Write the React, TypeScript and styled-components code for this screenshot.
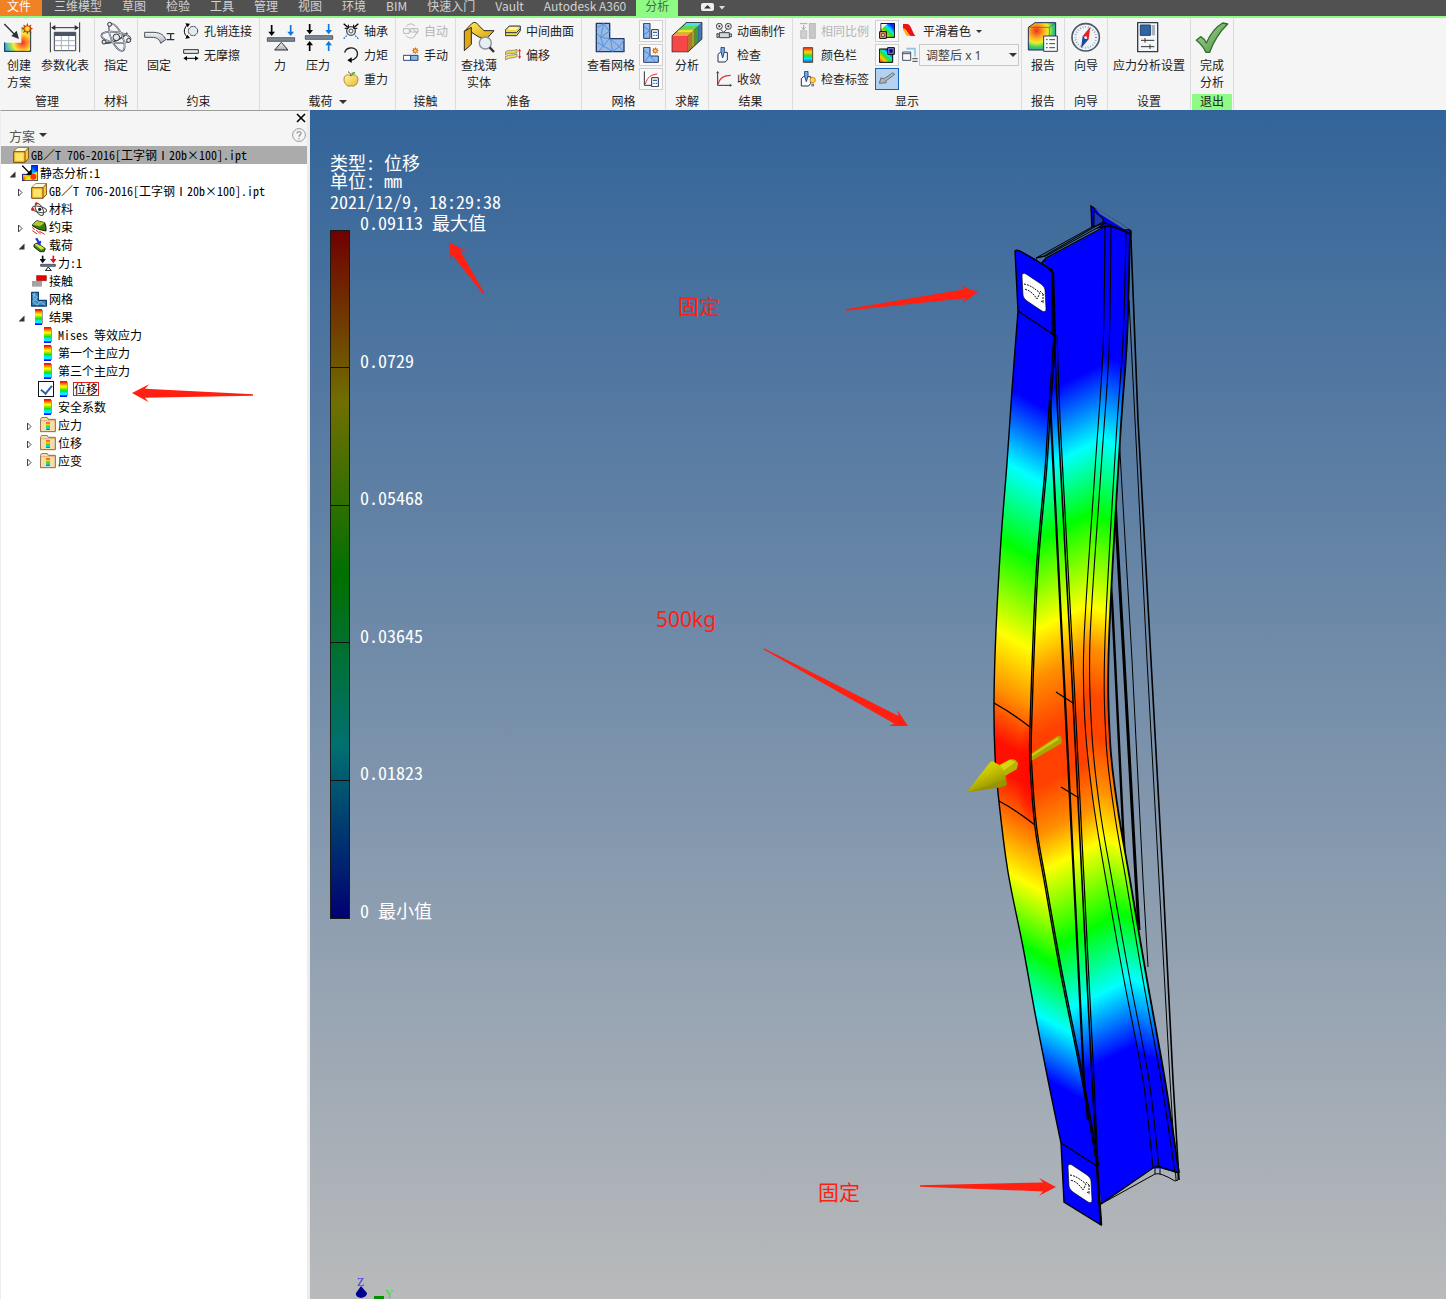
import React from "react";
import styled, { createGlobalStyle } from "styled-components";

const UI = `"Noto Sans", "Noto Sans CJK SC", sans-serif`;
const CJK = `"Noto Sans CJK SC", sans-serif`;

const Global = createGlobalStyle`
  * { box-sizing: border-box; }
  body { margin: 0; background: #fff; font-family: ${UI}; font-size: 12px; color: #222; }
  button, select, input { font: inherit; color: inherit; margin: 0; }
  ul { list-style: none; margin: 0; padding: 0; }
`;

/* ---------- shell ---------- */
const App_ = styled.div`
  display: flex;
  flex-direction: column;
  min-height: 100vh;
`;
const TabBar = styled.nav`
  display: flex;
  height: 18px;
  background: #515151;
  border-bottom: 2px solid #8dfb84;
  font-family: ${CJK};
`;
const Tab = styled.button<{ $kind?: "file" | "active" }>`
  border: 0;
  height: 16px;
  padding: 0 ${(p) => (p.$kind === "active" ? 9 : 10)}px;
  width: ${(p) => (p.$kind === "file" ? "42px" : "auto")};
  ${(p) => p.$kind === "file" && "padding: 0 11px 0 7px; margin-right: 2px;"}
  line-height: 12px;
  padding-bottom: 4px;
  white-space: nowrap;
  color: ${(p) => (p.$kind === "file" ? "#fff" : p.$kind === "active" ? "#4a6a48" : "#d2d2d2")};
  background: ${(p) => (p.$kind === "file" ? "#f08125" : p.$kind === "active" ? "#8dfb84" : "transparent")};
`;
const Collapse = styled.button`
  border: 0;
  background: none;
  height: 14px;
  margin-left: 22px;
  padding: 0;
  display: flex;
  align-items: center;
`;

/* ---------- ribbon ---------- */
const Ribbon = styled.div`
  display: flex;
  height: 92px;
  background: #f5f5f5;
`;
const Panel = styled.section<{ $w: number }>`
  flex: none;
  width: ${(p) => p.$w}px;
  display: flex;
  flex-direction: column;
  border-right: 1px solid #dcdcdc;
`;
const PanelBody = styled.div<{ $center?: boolean; $pad?: number }>`
  flex: 1;
  display: flex;
  padding: 1px 0 0 ${(p) => p.$pad ?? 0}px;
  justify-content: ${(p) => (p.$center ? "center" : "flex-start")};
`;
const PanelTitle = styled.h2<{ $exit?: boolean }>`
  margin: 0 1px;
  height: 16px;
  font-size: 12px;
  font-weight: 400;
  line-height: 16px;
  display: flex;
  align-items: center;
  justify-content: center;
  gap: 6px;
  background: ${(p) => (p.$exit ? "#8dfb84" : "transparent")};
`;
const BigButton = styled.button<{ $w?: number }>`
  flex: none;
  width: ${(p) => p.$w ?? 38}px;
  border: 0;
  padding: 1px 0 0;
  background: none;
  display: flex;
  flex-direction: column;
  align-items: center;
  line-height: 17px;
  white-space: pre;
  text-align: center;
  gap: 3px;
`;
const Column = styled.div<{ $gap?: number }>`
  display: flex;
  flex-direction: column;
  margin-left: ${(p) => p.$gap ?? 0}px;
`;
const SmallButton = styled.button<{ $off?: boolean }>`
  height: 24px;
  border: 0;
  padding: 0;
  background: none;
  display: flex;
  align-items: center;
  gap: 5px;
  white-space: nowrap;
  color: ${(p) => (p.$off ? "#b4b4b4" : "inherit")};
`;
const IconButton = styled.button<{ $on?: boolean }>`
  width: 24px;
  height: 22px;
  margin: 1px 0;
  padding: 0;
  display: grid;
  place-items: center;
  border: 1px solid ${(p) => (p.$on ? "#1064b8" : "#cfcfcf")};
  background: ${(p) => (p.$on ? "#b4d2ef" : "#fafafa")};
`;
const SelectWrap = styled.div`
  display: flex;
  align-items: center;
  height: 24px;
  gap: 1px;
`;
const SelectBox = styled.div`
  position: relative;
  display: flex;
  & > svg { position: absolute; right: 2px; top: 9px; pointer-events: none; }
`;
const Select = styled.select`
  appearance: none;
  width: 100px;
  height: 22px;
  padding: 0 6px;
  border: 1px solid #c8c8c8;
  border-radius: 0;
  background: #f5f5f5;
  color: #444;
`;
const Down = ({ w = 8 }: { w?: number }) => (
  <svg width={w} height={w / 2} viewBox="0 0 8 4" aria-hidden><path d="M0 0H8L4 4Z" fill="#333" /></svg>
);

type IP = { vb: string; w?: number; h?: number; children: React.ReactNode };
const IconSvg = styled.svg`
  flex: none;
`;
const Icon = ({ vb, w = 16, h = 16, children }: IP) => (
  <IconSvg width={w} height={h} viewBox={vb} fill="none" strokeLinejoin="round" aria-hidden>
    {children}
  </IconSvg>
);
const Big = ({ x, children }: { x: number; children: React.ReactNode }) => (
  <Icon vb={`${x} 60 108 102`} w={36} h={34}>{children}</Icon>
);

const K = "#2c3038";
const B = "#0a78e0";
const Star = ({ x, y, r = 16 }: { x: number; y: number; r?: number }) => {
  const pts = Array.from({ length: 16 }, (_, i) => {
    const a = (i * Math.PI) / 8;
    const q = i % 2 ? r * 0.5 : r;
    return `${x + q * Math.cos(a)},${y + q * Math.sin(a)}`;
  }).join(" ");
  return (<><polygon points={pts} fill="#d22b00" /><circle cx={x} cy={y} r={r * 0.42} fill="#ffe23c" stroke="#f08a00" strokeWidth="2" /></>);
};
const VArrow = ({ x, from, to, c }: { x: number; from: number; to: number; c: string }) => {
  const s = to > from ? 1 : -1;
  return (<><path d={`M${x} ${from}V${to - s * 8}`} stroke={c} strokeWidth="5" /><path d={`M${x - 10} ${to - s * 13}H${x + 10}L${x} ${to}Z`} fill={c} /></>);
};
const HiddenSvg = styled.svg`
  position: absolute;
`;
const Defs = () => (
  <HiddenSvg width="0" height="0" aria-hidden>
    <defs>
      <radialGradient id="heat" gradientUnits="userSpaceOnUse" cx="68" cy="128" r="56">
        <stop offset="0" stopColor="#f03030" /><stop offset=".25" stopColor="#ff8a20" /><stop offset=".5" stopColor="#ffe640" />
        <stop offset=".7" stopColor="#7ee060" /><stop offset="1" stopColor="#30a0ff" />
      </radialGradient>
      <radialGradient id="heat2" cx=".3" cy=".3" r=".8">
        <stop offset="0" stopColor="#f03020" /><stop offset=".35" stopColor="#ffb020" /><stop offset=".55" stopColor="#e8f030" />
        <stop offset=".75" stopColor="#40d060" /><stop offset="1" stopColor="#2080f0" />
      </radialGradient>
      <linearGradient id="rainV" x1="0" y1="0" x2="0" y2="1">
        <stop offset="0" stopColor="#f02020" /><stop offset=".3" stopColor="#ffd800" /><stop offset=".55" stopColor="#30d830" />
        <stop offset=".75" stopColor="#00e8f0" /><stop offset="1" stopColor="#1050ff" />
      </linearGradient>
      <linearGradient id="rainStrip" gradientUnits="userSpaceOnUse" x1="0" y1="0" x2="0" y2="16">
        <stop offset=".06" stopColor="#f01010" /><stop offset=".2" stopColor="#ff9000" /><stop offset=".35" stopColor="#ffff00" />
        <stop offset=".6" stopColor="#20d820" /><stop offset=".7" stopColor="#00e8c0" /><stop offset=".76" stopColor="#00f0ff" />
        <stop offset=".88" stopColor="#00f0ff" /><stop offset=".92" stopColor="#0010ff" />
      </linearGradient>
      <linearGradient id="rainD" x1="0" y1="1" x2="1" y2="0">
        <stop offset="0" stopColor="#ff1000" /><stop offset=".25" stopColor="#ffd000" /><stop offset=".45" stopColor="#30e020" />
        <stop offset=".6" stopColor="#00e8ff" /><stop offset=".8" stopColor="#0030ff" />
      </linearGradient>
      <linearGradient id="gold" x1="0" y1="0" x2="1" y2="1">
        <stop offset="0" stopColor="#fff060" /><stop offset="1" stopColor="#d8a010" />
      </linearGradient>
      <linearGradient id="fruit" x1="0" y1="0" x2="1" y2="1">
        <stop offset="0" stopColor="#fff8a8" /><stop offset="1" stopColor="#e8b830" />
      </linearGradient>
      <linearGradient id="steel" x1="0" y1="0" x2="0" y2="1">
        <stop offset="0" stopColor="#f4f6f8" /><stop offset="1" stopColor="#a8b0ba" />
      </linearGradient>
      <linearGradient id="tick" x1="0" y1="0" x2="1" y2="1">
        <stop offset="0" stopColor="#a8d890" /><stop offset="1" stopColor="#4f9048" />
      </linearGradient>
    </defs>
  </HiddenSvg>
);

/* ---------- ribbon icons ---------- */
const I = {
  create: (<Big x={3}><path d="M12 128H64V80H93V156H12Z" fill="url(#heat)" /><path d="M14 127V154H92V82" stroke="#1c2c50" strokeWidth="3" /><path d="M13 72L46 106" stroke={K} strokeWidth="4" /><path d="M57 117L34 108L50 92Z" fill={K} /><Star x={82} y={86} r={18} /></Big>),
  table: (<Big x={141}><path d="M151 67V157M239 67V157M158 83H232" stroke={K} strokeWidth="3" /><path d="M153 83L166 75V91ZM237 83L224 75V91Z" fill={K} /><rect x="163" y="97" width="64" height="55" fill="#fff" stroke="#3a4250" strokeWidth="3" /><path d="M163 97H227V108H163Z" fill="#4a5464" /><path d="M164 122H226M164 137H226M184 108V152M206 108V152" stroke="#aab0ba" strokeWidth="3" /></Big>),
  atom: (<Big x={294}><g stroke="#3a4454" strokeWidth="5"><ellipse cx="348" cy="112" rx="44" ry="16" transform="rotate(8 348 112)" /><ellipse cx="350" cy="112" rx="44" ry="17" transform="rotate(66 350 112)" /><path d="M310 128C325 134 365 118 382 98" /></g><g stroke="#e4eaf0" strokeWidth="2"><ellipse cx="348" cy="112" rx="44" ry="16" transform="rotate(8 348 112)" /><ellipse cx="350" cy="112" rx="44" ry="17" transform="rotate(66 350 112)" /></g><g fill="#e4e9ee" stroke={K} strokeWidth="3"><circle cx="349" cy="112" r="10" /><circle cx="329" cy="73" r="6" /><circle cx="386" cy="121" r="6" /><circle cx="312" cy="126" r="6" /></g></Big>),
  fix: (<Big x={423}><path d="M434 97H462C482 98 493 106 497 119L482 130C479 118 470 112 456 112H434Z" fill="url(#steel)" stroke="#4a505a" strokeWidth="3" /><path d="M500 101H523M500 119H523M512 101V119" stroke={K} strokeWidth="4" /></Big>),
  pin: (<Icon vb="549 69 48 48"><circle cx="579" cy="93" r="14" fill="#e6eaee" stroke="#3c4654" strokeWidth="3" strokeDasharray="9 2" /><path d="M562 75C550 86 550 101 562 111" stroke="#000" strokeWidth="3" /><path d="M556 70L570 71L563 82ZM556 116L570 114L562 104Z" fill="#000" /></Icon>),
  slide: (<Icon vb="549 141 48 48"><rect x="551" y="149" width="44" height="11" fill="#e8ecf0" stroke={K} strokeWidth="3" /><path d="M556 175H590" stroke="#000" strokeWidth="3" /><path d="M550 175L561 168V182ZM596 175L585 168V182Z" fill="#000" /></Icon>),
  force: (<Big x={786}><VArrow x={815} from={75} to={108} c="#000" /><VArrow x={872} from={75} to={108} c={B} /><rect x="802" y="113" width="82" height="11" fill="#7d8894" stroke={K} strokeWidth="2" /><path d="M844 127L824 150H864Z" fill="url(#steel)" stroke={K} strokeWidth="3" /></Big>),
  press: (<Big x={900}><VArrow x={929} from={72} to={103} c="#000" /><VArrow x={986} from={72} to={103} c={B} /><VArrow x={929} from={153} to={123} c="#000" /><VArrow x={986} from={153} to={123} c={B} /><rect x="916" y="107" width="82" height="11" fill="#7d8894" stroke={K} strokeWidth="2" /></Big>),
  bearing: (<Icon vb="1029 69 48 48"><circle cx="1053" cy="93" r="13" stroke="#444c58" strokeWidth="4" /><circle cx="1053" cy="93" r="6" stroke="#444c58" strokeWidth="3" /><path d="M1031 71L1043 82M1075 71L1063 82" stroke="#000" strokeWidth="4" /><path d="M1045 74V85H1034M1061 74V85H1072" stroke="#000" strokeWidth="3" /><path d="M1031 116L1043 104M1075 116L1063 104" stroke={B} strokeWidth="4" strokeDasharray="5 3" /></Icon>),
  moment: (<Icon vb="1029 141 48 48"><path d="M1034 158C1038 142 1062 138 1071 154C1076 168 1066 180 1052 181" stroke="#222" strokeWidth="4" /><path d="M1042 181L1055 172V189Z" fill="#000" /></Icon>),
  apple: (<Icon vb="1029 213 48 48"><path d="M1053 228C1043 220 1031 226 1032 240C1034 254 1045 262 1053 257C1062 262 1073 253 1074 239C1074 226 1062 221 1053 228Z" fill="url(#fruit)" stroke="#b08a2c" strokeWidth="3" /><path d="M1053 228C1052 221 1048 217 1044 215" stroke="#6a4a18" strokeWidth="3" /><path d="M1053 224C1054 216 1062 215 1066 216C1064 223 1058 226 1053 224Z" fill="#58a830" /></Icon>),
  auto: (<Icon vb="39 69 48 48"><g stroke="#b8b8b8" strokeWidth="3"><path d="M48 80C55 70 67 69 75 78M48 106C54 115 64 116 71 111" /><path d="M40 86H58V100H40ZM62 86H84V96H62Z" /><path d="M66 84L84 101M80 98L72 112" /></g></Icon>),
  manual: (<Icon vb="39 141 48 48"><rect x="40" y="166" width="22" height="15" fill="#fff" stroke="#26467c" strokeWidth="3" /><rect x="62" y="166" width="22" height="15" fill="#8db4e2" stroke="#26467c" strokeWidth="3" /><Star x={76} y={152} r={11} /></Icon>),
  thin: (<Big x={213}><path d="M244 94L223 94L246 70C252 66 258 66 262 72L282 92L312 92L292 114C276 120 262 108 246 98Z" fill="url(#gold)" stroke="#2b2618" strokeWidth="3" /><path d="M223 94L244 82V133L223 152Z" fill="#e0a818" stroke="#2b2618" strokeWidth="3" /><circle cx="286" cy="129" r="18" fill="#e6eef4" stroke="#8a8f96" strokeWidth="4" /><path d="M299 142L312 156" stroke="#333" strokeWidth="7" /></Big>),
  mid: (<Icon vb="345 69 48 48"><path d="M346 90L358 78H391V92L380 107H346Z" fill="#f8d838" stroke="#1b3560" strokeWidth="3" /><path d="M346 98H379L391 86" stroke="#1b3560" strokeWidth="3" /><path d="M352 88L360 82H386L379 90Z" fill="#fff8c0" /></Icon>),
  offset: (<Icon vb="345 141 48 48"><path d="M346 156C358 147 366 155 381 148V158C366 164 358 155 346 165Z" fill="#f8d838" stroke="#5d6a78" strokeWidth="2" /><path d="M346 170C358 162 366 168 381 162V170C366 176 358 171 346 180Z" fill="#f8e060" stroke="#5d6a78" strokeWidth="2" /><path d="M389 150V172" stroke="#e02020" strokeWidth="3" /><path d="M384 154L389 146L393 154ZM384 169L389 177L393 169Z" fill="#e02020" /></Icon>),
  mesh: (<Big x={609}><path d="M619 70H659V116H702V155H619Z" fill="#9bb8e0" stroke="#203a66" strokeWidth="4" /><path d="M620 84L641 71L658 94L632 112L620 98M632 112L658 116L640 138L620 126M641 71L632 112L640 138L626 154M640 138L668 154L662 118L688 140L701 120M668 154L688 140L700 154" stroke="#4f92e8" strokeWidth="3" /></Big>),
  meshCalc: (<Icon vb="759 69 48 48"><path d="M761 70H780V115H761Z" fill="#94b9ec" stroke="#203a66" strokeWidth="3" /><path d="M762 80L779 92L762 104" stroke="#3f88e8" strokeWidth="3" /><rect x="785" y="89" width="20" height="27" fill="#fff" stroke="#1d2e4a" strokeWidth="3" /><path d="M789 97H801M790 106H794M797 106H801" stroke="#2f68b0" strokeWidth="4" /></Icon>),
  meshNew: (<Icon vb="759 141 48 48"><path d="M761 142H780V168H805V187H761Z" fill="#94b9ec" stroke="#203a66" strokeWidth="3" /><path d="M762 152L779 164L766 184M779 168L796 185" stroke="#3f88e8" strokeWidth="3" /><Star x={796} y={152} r={11} /></Icon>),
  converge: (<Icon vb="759 213 48 48"><path d="M763 214V256H785" stroke={K} strokeWidth="3" /><path d="M766 252C772 232 782 224 802 222" stroke="#e83030" strokeWidth="3" /><rect x="785" y="233" width="20" height="27" fill="#fff" stroke="#1d2e4a" strokeWidth="3" /><path d="M789 241H801M790 250H794M797 250H801" stroke="#2f68b0" strokeWidth="4" /></Icon>),
  solve: (<Big x={837}><path d="M847 108L890 68H935V116L893 155H847Z" fill="#333" stroke="#222" strokeWidth="4" /><path d="M847 108H893V155H847Z" fill="#f44848" /><path d="M847 108L858 98H904L893 108Z" fill="#f8a040" /><path d="M858 98L869 88H914L904 98Z" fill="#f4e030" /><path d="M869 88L880 78H925L914 88Z" fill="#60d850" /><path d="M880 78L890 68H935L925 78Z" fill="#58d8f0" /><path d="M893 108L904 98V145L893 155Z" fill="#b87430" /><path d="M904 98L914 88V136L904 145Z" fill="#a8a028" /><path d="M914 88L925 78V126L914 136Z" fill="#3e9a40" /><path d="M925 78L935 68V116L925 126Z" fill="#3f78b8" /></Big>),
  camera: (<Icon vb="978 69 48 48"><g stroke="#3a3f48" strokeWidth="3"><circle cx="988" cy="79" r="9" fill="#e8eaee" /><circle cx="1015" cy="79" r="9" fill="#e8eaee" /><path d="M992 88L1001 97L1010 88" /><path d="M988 98H1018V113H988ZM988 104L981 100V113L988 110M1018 102H1025V110H1018" fill="#d4d8de" /></g><circle cx="988" cy="79" r="3" fill={K} /><circle cx="1015" cy="79" r="3" fill={K} /></Icon>),
  probe: (<Icon vb="978 141 48 48"><path d="M984 163L991 157H1012V180L1005 186H984Z" fill="#f8fafc" stroke="#26324a" strokeWidth="3" /><path d="M993 142H1003V155L998 174L993 155Z" fill="#7fb0e8" stroke="#1c4a90" strokeWidth="3" /></Icon>),
  curve: (<Icon vb="978 213 48 48"><path d="M983 216V256H1023" stroke={K} strokeWidth="3" /><path d="M979 220L983 214L987 220M1019 252L1025 256L1019 260" stroke={K} strokeWidth="2" /><path d="M985 252C988 236 1000 226 1022 226" stroke="#e83030" strokeWidth="4" /></Icon>),
  same: (<Icon vb="60 69 48 48"><path d="M60 71H82M71 75V88M65 82L71 89L77 82" stroke="#a8a8a8" strokeWidth="3" /><rect x="62" y="92" width="18" height="23" fill="#d0d0d0" stroke="#b0b0b0" strokeWidth="2" /><rect x="88" y="70" width="18" height="45" fill="#c8c8c8" stroke="#a8a8a8" strokeWidth="2" /></Icon>),
  bar: (<Icon vb="60 141 48 48"><rect x="70" y="143" width="28" height="44" fill="url(#rainV)" stroke="#5a4a2a" strokeWidth="3" /></Icon>),
  label: (<Icon vb="60 213 48 48"><path d="M64 236L70 230H92V250L86 258H64Z" fill="#f8fafc" stroke="#26324a" strokeWidth="3" /><path d="M74 214H84V228L79 245L74 228Z" fill="#7fb0e8" stroke="#1c4a90" strokeWidth="3" /><circle cx="98" cy="240" r="8" fill="#ffd850" stroke="#d88a10" strokeWidth="3" /><path d="M94 251H102V259H94Z" fill="#7a8088" /></Icon>),
  max: (<Icon vb="297 69 48 48"><path d="M303 70H344V112H303Z" fill="url(#rainD)" stroke="#000" strokeWidth="3" /><path d="M304 72H322L304 88Z" fill="#f5f5f5" /><rect x="299" y="95" width="20" height="20" fill="#f8a070" stroke="#000" strokeWidth="3" /><rect x="305" y="101" width="8" height="8" fill="#fff" stroke="#000" strokeWidth="2" /></Icon>),
  min: (<Icon vb="297 141 48 48"><path d="M298 147H338V187H298Z" fill="url(#rainD)" stroke="#000" strokeWidth="3" /><rect x="323" y="143" width="20" height="20" fill="#8080f4" stroke="#000" strokeWidth="3" /><rect x="329" y="149" width="8" height="8" fill="#0000d0" stroke="#000" strokeWidth="2" /></Icon>),
  load: (<Icon vb="297 213 48 48"><path d="M298 250L303 233L309 237C320 232 328 226 338 218L344 223C334 230 326 238 316 243L319 248Z" fill="#b0b6bc" stroke="#686e74" strokeWidth="3" /></Icon>),
  smooth: (<Icon vb="366 69 48 48"><path d="M369 72H382C394 74 394 92 406 108H392C380 98 384 90 369 86Z" fill="#f01010" /><path d="M369 84C382 88 378 98 391 108H382C373 102 376 94 369 91Z" fill="#ffb000" /><path d="M369 92C374 96 373 104 380 108H369Z" fill="#e8f0f8" /></Icon>),
  adjust: (<Icon vb="363 141 48 48"><path d="M376 146H402V170" stroke="#8cc4e8" strokeWidth="5" /><rect x="365" y="156" width="24" height="25" fill="#f8fafc" stroke="#46505e" strokeWidth="3" /><path d="M365 161H389" stroke="#46505e" strokeWidth="3" /><path d="M394 176H410M394 184H410" stroke="#444" strokeWidth="3" /></Icon>),
  report: (<Big x={735}><path d="M745 82L765 68H827V136L812 150H745Z" fill="url(#heat2)" stroke="#1f2f50" strokeWidth="3" /><path d="M745 82H808L827 68M808 82V150" stroke="#3a7040" strokeWidth="2" /><rect x="791" y="108" width="41" height="46" fill="#f8fafc" stroke="#2a3a55" strokeWidth="3" /><path d="M798 119H803M798 131H803M798 143H803M808 119H825M808 131H825M808 143H825" stroke="#444" strokeWidth="3" /></Big>),
  wizard: (<Big x={864}><circle cx="917" cy="112" r="41" fill="#f0f4f8" stroke="#4b5868" strokeWidth="5" /><circle cx="917" cy="112" r="31" stroke="#7f8c9d" strokeWidth="6" strokeDasharray="2 6" /><path d="M931 80L926 118L908 108Z" fill="#e82020" /><path d="M903 145L908 108L926 118Z" fill="#1848a0" /><circle cx="917" cy="113" r="4" fill="#fff" /></Big>),
  settings: (<Big x={1053}><rect x="1073" y="68" width="60" height="87" fill="#f4f6f8" stroke="#333c4a" strokeWidth="4" /><rect x="1081" y="75" width="30" height="31" fill="#2d66a0" stroke="#1d3f70" strokeWidth="3" /><rect x="1115" y="75" width="10" height="31" fill="#a9b3c0" /><path d="M1083 121H1123M1083 140H1123M1095 114V128M1110 133V147" stroke="#333" strokeWidth="3" /></Big>),
  finish: (<Big x={1242}><path d="M1249 121L1262 110C1270 114 1275 121 1279 129C1290 104 1308 80 1328 69L1343 72C1318 96 1300 126 1289 157H1278C1271 143 1261 130 1249 121Z" fill="url(#tick)" stroke="#2f6f2c" strokeWidth="4" /></Big>),
};

/* ---------- browser ---------- */
const Main = styled.main`
  flex: 1;
  display: grid;
  grid-template-columns: 310px 1fr;
`;
const Browser = styled.aside`
  position: relative;
  background: #fff;
  border-top: 1px solid #9c9c9c;
  border-left: 1px solid #ececec;
  border-right: 3px solid #ececec;
`;
const BrowserHead = styled.header`
  background: #f5f5f5;
  height: 35px;
  display: flex;
  flex-direction: column;
`;
const HeadRow = styled.div`
  display: flex;
  align-items: center;
  justify-content: space-between;
  padding: 0 1px 0 8px;
  height: 14px;
  &:last-child { height: 20px; }
`;
const PlainButton = styled.button`
  border: 0;
  background: none;
  padding: 0;
  display: flex;
  align-items: center;
  gap: 4px;
  font-size: 13px;
  color: #555;
`;
const Row = styled.li<{ $level: number; $root?: boolean }>`
  display: flex;
  align-items: center;
  height: 18px;
  padding-left: ${(p) => p.$level * 9}px;
  background: ${(p) => (p.$root ? "#ababab" : "transparent")};
  color: #000;
  & > svg { margin-right: 2px; }
`;
const Twist = styled.button`
  width: 12px;
  height: 16px;
  flex: none;
  border: 0;
  padding: 3px 0 0;
  background: none;
  display: flex;
  align-items: center;
`;
const Spacer = styled.span<{ $w: number }>`
  width: ${(p) => p.$w}px;
  flex: none;
`;
const Check = styled.input`
  appearance: none;
  width: 16px;
  height: 16px;
  border: 1px solid #111;
  background: #fff;
  margin-right: 2px;
  display: grid;
  place-items: center;
  &:checked::after {
    content: "";
    width: 5px;
    height: 9px;
    border: solid #2f62a4;
    border-width: 0 2px 2px 0;
    transform: rotate(40deg);
    margin-bottom: 2px;
  }
`;
const Label = styled.label<{ $boxed?: boolean }>`
  display: block;
  white-space: pre;
  outline: ${(p) => (p.$boxed ? "1px solid #e02020" : "none")};
  font: 12px/12px ${CJK};
`;
/* ASCII runs take the half-width forms, so a letter is half an ideograph wide */
const Half = styled.span`
  font-feature-settings: "hwid";
`;
const Mixed = ({ text }: { text: string }) => (
  <>{text.split(/([\x20-\x7e]+)/).map((t, i) => (i % 2 ? <Half key={i}>{t}</Half> : t))}</>
);

const Cube = (<Icon vb="39 111 48 48"><path d="M41 125L54 113H86V145L75 157H41Z" fill="#f6c838" stroke="#7a4a10" strokeWidth="3" /><path d="M41 125L54 113H86L75 125Z" fill="#fff8d8" /><path d="M41 125H75V157M75 125L86 113" stroke="#7a4a10" strokeWidth="3" /><path d="M46 130H70V152H46Z" fill="#ffe468" /></Icon>);
const Strip = (<Icon vb="0 0 16 16"><path d="M4 0H11V16H4Z" fill="url(#rainStrip)" /><path d="M11.5 1V15" stroke="#999" /></Icon>);
const Folder = (<Icon vb="120 381 48 48"><path d="M121 388L126 382H141L145 388H166V425H121Z" fill="#f7dda8" stroke="#8a6840" strokeWidth="3" /><path d="M122 392H165" stroke="#c9a468" strokeWidth="2" /><rect x="138" y="397" width="12" height="23" fill="url(#rainV)" /></Icon>);
const T = {
  cube: Cube, strip: Strip, folder: Folder,
  study: (<Icon vb="66 165 48 48"><path d="M67 193H95V166H113V212H67Z" fill="url(#rainD)" stroke="#101080" strokeWidth="3" /><path d="M92 196L112 184V211H72Z" fill="#ffe010" /><circle cx="100" cy="200" r="9" fill="#ff3010" /><path d="M67 167L88 189" stroke="#000" strokeWidth="4" /><path d="M94 195V178L78 195Z" fill="#000" /></Icon>),
  atom: (<Icon vb="93 273 48 48"><g stroke="#4a4a4a" strokeWidth="3"><ellipse cx="118" cy="298" rx="22" ry="9" transform="rotate(12 118 298)" /><ellipse cx="118" cy="298" rx="20" ry="10" transform="rotate(62 118 298)" /></g><circle cx="98" cy="298" r="5" fill="#e02020" /><circle cx="109" cy="281" r="4" fill="#e02020" /><circle cx="119" cy="298" r="5" fill="#222" /></Icon>),
  constraint: (<Icon vb="93 327 48 48"><path d="M98 344L110 332L134 338L138 352V363L116 358L98 348Z" fill="#3e7a10" stroke="#102000" strokeWidth="3" /><path d="M98 344L110 332L134 338L120 349Z" fill="#b0c830" /><path d="M97 352L104 360M97 362L112 372M108 360L122 372M118 364L134 373" stroke="#e02020" strokeWidth="3" /></Icon>),
  loads: (<Icon vb="93 381 48 48"><path d="M102 404L112 399L136 416L132 425H120L102 411Z" fill="#2f8a20" stroke="#10330c" strokeWidth="3" /><path d="M104 404L112 400L133 415L124 419Z" fill="#e6e020" /><path d="M105 386L112 383L118 394L124 392L121 407L108 400L113 397Z" fill="#1838e0" /></Icon>),
  force: (<Icon vb="120 435 48 48"><VArrow x={128} from={437} to={460} c="#111" /><VArrow x={160} from={437} to={460} c="#e01010" /><rect x="122" y="463" width="44" height="6" fill="#5a86b4" stroke="#223" strokeWidth="2" /><path d="M145 471L136 482H154Z" fill="#fff" stroke="#111" strokeWidth="3" /></Icon>),
  contact: (<Icon vb="93 489 48 48"><path d="M96 513H126V530H96Z" fill="#a4a4a4" /><path d="M110 497H139V512H110Z" fill="#f00000" stroke="#801010" strokeWidth="2" /></Icon>),
  mesh: (<Icon vb="93 3 48 48"><path d="M95 7H115V31H139V48H95Z" fill="#3f8ec0" stroke="#123c70" strokeWidth="4" /><path d="M97 12L113 22L98 34L112 46L120 34L136 46M104 8L100 24L113 34" stroke="#a0d8e8" strokeWidth="2" /></Icon>),
};

type Node = { text: string; level: number; icon: keyof typeof T; open?: boolean; check?: boolean };
const part = "GB／T 706-2016[工字钢Ⅰ20b×100].ipt";
const nodes: Node[] = [
  { text: part, level: 0, icon: "cube" },
  { text: "静态分析:1", level: 1, icon: "study", open: true },
  { text: part, level: 2, icon: "cube", open: false },
  { text: "材料", level: 2, icon: "atom" },
  { text: "约束", level: 2, icon: "constraint", open: false },
  { text: "载荷", level: 2, icon: "loads", open: true },
  { text: "力:1", level: 3, icon: "force" },
  { text: "接触", level: 2, icon: "contact" },
  { text: "网格", level: 2, icon: "mesh" },
  { text: "结果", level: 2, icon: "strip", open: true },
  { text: "Mises 等效应力", level: 3, icon: "strip" },
  { text: "第一个主应力", level: 3, icon: "strip" },
  { text: "第三个主应力", level: 3, icon: "strip" },
  { text: "位移", level: 3, icon: "strip", check: true },
  { text: "安全系数", level: 3, icon: "strip" },
  { text: "应力", level: 3, icon: "folder", open: false },
  { text: "位移", level: 3, icon: "folder", open: false },
  { text: "应变", level: 3, icon: "folder", open: false },
];

/* ---------- annotations ---------- */
const arrowPoints = (x1: number, y1: number, x2: number, y2: number) => {
  const d = Math.hypot(x2 - x1, y2 - y1);
  const ux = (x2 - x1) / d, uy = (y2 - y1) / d;
  const p = (back: number, side: number) => `${x2 - ux * back - uy * side},${y2 - uy * back + ux * side}`;
  return [p(0, 0), p(17, 9), p(13, 4.5), p(d, 0.7), p(d, -0.7), p(13, -4.5), p(17, -9)].join(" ");
};
const BrowserArrow = styled.svg`
  position: absolute;
  left: 130px;
  top: 270px;
  pointer-events: none;
`;

/* ---------- viewer ---------- */
const Viewer = styled.section`
  position: relative;
  overflow: hidden;
  padding: 43px 20px 0;
  background: linear-gradient(#336499, #b9babb);
  color: #fff;
  font: 18px/18px ${CJK};
`;
const Scene = styled.svg`
  position: absolute;
  left: 0;
  top: 0;
`;
const Info = styled.p`
  margin: 0 0 3px;
  white-space: pre;
`;
const Legend = styled.div`
  display: flex;
  gap: 10px;
  height: 706px;
`;
const Scale = styled.div`
  width: 20px;
  margin-top: 17px;
  border: 1px solid #1a1a1a;
  display: grid;
  grid-template-rows: repeat(5, 1fr);
  background: linear-gradient(#700000, #706f00 25%, #007000 50%, #007070 75%, #000070);
  & > i { border-bottom: 1px solid #111; }
  & > i:last-child { border: 0; }
`;
const Ticks = styled.div`
  display: flex;
  flex-direction: column;
  justify-content: space-between;
  white-space: pre;
`;
const Note = styled.div<{ $x: number; $y: number }>`
  position: absolute;
  left: ${(p) => p.$x}px;
  top: ${(p) => p.$y}px;
  color: #ff2012;
  font: 21px/24px ${UI};
`;

/* stops: blue, cyan, green, yellow, orange, hot, hot, orange, yellow, green, cyan, blue */
const COL = (hot: string) => ["#0000ff", "#00ffff", "#00ff00", "#ffff00", "#ff9000", hot, hot, "#ff9000", "#ffff00", "#00ff00", "#00ffff", "#0000ff"];
const Grad = ({ id, x0, s, ys, hot }: { id: string; x0: number; s: number; ys: number[]; hot: string }) => (
  <linearGradient id={id} gradientUnits="userSpaceOnUse" x1="0" y1="200" x2="0" y2="1200" gradientTransform={`matrix(1 ${s} 0 1 0 ${-s * x0})`}>
    {ys.map((y, i) => <stop key={i} offset={(y - 200) / 1000} stopColor={COL(hot)[i]} />)}
  </linearGradient>
);
/* Catmull-Rom spline through the listed points of an edge */
type P = [number, number];
const curve = (p: P[]) => {
  let d = `${p[0][0]} ${p[0][1]}`;
  for (let i = 0; i < p.length - 1; i++) {
    const a = p[i - 1] ?? p[i], b = p[i], c = p[i + 1], e = p[i + 2] ?? c;
    d += `C${b[0] + (c[0] - a[0]) / 6} ${b[1] + (c[1] - a[1]) / 6} ${c[0] - (e[0] - b[0]) / 6} ${c[1] - (e[1] - b[1]) / 6} ${c[0]} ${c[1]}`;
  }
  return d;
};
const rev = (p: P[]) => [...p].reverse();
const shift = (p: P[], dx: number): P[] => p.map(([x, y]) => [x + dx, y]);
const frontL: P[] = [[1018, 311], [1012, 390], [1007, 463], [1001, 540], [996, 630], [994, 700], [995, 755], [999, 802], [1008, 872], [1023, 947], [1035, 1013], [1048, 1080], [1061, 1143]];
const frontR: P[] = [[1054, 335], [1048, 423], [1045, 470], [1037, 560], [1033, 640], [1030, 727], [1030, 763], [1035, 827], [1044, 880], [1060, 970], [1082, 1080], [1097, 1166]];
const filletA: P[] = [[1105, 227], [1103, 350], [1095, 470], [1084, 640], [1085, 723], [1093, 800], [1106, 880], [1124, 980], [1143, 1080], [1153, 1168]];
const filletB: P[] = [[1111, 227], [1109, 350], [1101, 470], [1090, 640], [1092, 735], [1100, 810], [1112, 880], [1130, 980], [1149, 1080], [1159, 1168]];
const backR: P[] = [[1130, 233], [1127, 340], [1120, 440], [1109, 640], [1110, 740], [1118, 810], [1130, 880], [1147, 980], [1165, 1080], [1179, 1173]];

const Fixture = ({ x, y }: { x: number; y: number }) => (
  <g transform={`translate(${x} ${y})`}>
    <path d="M0 3Q0 -1 4 1L19 11Q23 14 23 17L24 36Q24 40 20 38L5 28Q1 25 1 22Z" fill="#fff" stroke="#000" strokeWidth=".6" />
    <path d="M2 11C8 12 12 15 18 20L15 26C11 20 7 17 2 16M18 18L22 22M19 28L22 30M21 21V29" fill="none" stroke="#111" strokeWidth="1" strokeDasharray="2 1" />
  </g>
);

const Model = () => (
  <Scene width="1136" height="1189" viewBox="310 110 1136 1189" role="img" aria-label="位移云图">
    <defs>
      <Grad id="gFront" x0={1000} s={0.55} hot="#ff1000" ys={[383, 459, 540, 632, 690, 742, 770, 825, 868, 934, 994, 1054]} />
      <Grad id="gWeb" x0={1080} s={-0.5} hot="#ff4000" ys={[375, 450, 519, 608, 656, 715, 765, 815, 852, 934, 1004, 1073]} />
      <Grad id="gBack" x0={1100} s={0.4} hot="#ff4600" ys={[354, 438, 516, 610, 650, 700, 740, 790, 837, 905, 966, 1038]} />
      <radialGradient id="hot" gradientUnits="userSpaceOnUse" cx="0" cy="0" r="1" gradientTransform="translate(1031 775) scale(14 60)">
        <stop offset="0" stopColor="#ff0800" /><stop offset="1" stopColor="#ff0800" stopOpacity="0" />
      </radialGradient>
      <linearGradient id="cone" x1="0" y1="0" x2=".6" y2="1"><stop offset="0" stopColor="#e8e800" /><stop offset=".5" stopColor="#c8c400" /><stop offset="1" stopColor="#8c8800" /></linearGradient>
    </defs>

    {/* undeformed outline behind the part */}
    <g fill="none" stroke="#000" strokeWidth="1">
      <path d="M1131 240L1138 420L1151 660L1163 880L1173 1080L1179 1180" strokeWidth="1.6" />
      <path d="M1129 300L1135 420L1147 660L1159 880L1170 1080L1176 1180" />
      <path d="M1117 400L1121 470L1132 660L1143 880L1148 967" />
      <path d="M1114 480L1117 537L1124 660L1136 880L1139 930" strokeWidth="3" />
      <path d="M1109 560L1112 600L1115 660L1123 827L1125 860" strokeWidth="2.4" />
      <path d="M1101 1204L1155 1174Q1160 1172 1175 1181L1178 1180V1165M1155 1166V1174M1160 1166V1174" />
    </g>

    {/* rear flange end */}
    <path d="M1091 206L1131 231V240L1108 226L1092 229Z" fill="#0000e8" stroke="#000" strokeWidth="1.4" />
    <path d="M1094 207L1129 229L1124 229L1100 214Z" fill="#466e9c" />
    <path d="M1094 211L1103 219V224L1094 227Z" fill="#1838b8" stroke="#000" />
    <path d="M1036 258L1092 227L1106 223L1046 256Z" fill="#426c9c" stroke="#000" />

    <path d={`M${curve(filletB)}L${curve(rev(backR))}Z`} fill="url(#gBack)" />
    <path d={`M${curve(filletA)}L${curve(rev(filletB))}Z`} fill="url(#gBack)" stroke="url(#gBack)" />
    <path d={`M1042 261L${curve(filletA)}L1101 1204L${curve(rev(frontR))}L1052 272Z`} fill="url(#gWeb)" />
    <path d={`M1015 251Q1017 249 1022 252L1036 259L1052 272L${curve(frontR)}L1101 1225L1064 1202L${curve(rev(frontL))}Z`} fill="url(#gFront)" />
    <path d="M1017 710L1030 727V763L1035 827L1017 812Z" fill="url(#hot)" />

    <g fill="none" stroke="#000" strokeWidth="1.1">
      <path d={`M1015 251Q1017 249 1022 252L1052 270L${curve(frontR)}L1101 1225L1064 1202L${curve(rev(frontL))}Z`} strokeWidth="1.4" />
      <path d={`M${curve(shift(frontR, 1.6))}`} strokeWidth="1.4" />
      <path d="M1052 270V335M1018 311L1054 335M1061 1143L1097 1166" strokeWidth="1.4" />
      <path d="M1052 272L1042 263L1046 258L1104 227Q1110 224 1130 234" strokeWidth="1.4" />
      <path d="M1036 258L1044 256L1103 222L1131 233" />
      <path d="M1054 335L1058 420L1071 660L1082 880L1092 1080L1097 1166L1101 1225" strokeWidth="1.6" />
      <path d="M1057 335L1060 420L1073 660L1084 880L1094 1080L1098 1166" strokeWidth="1.2" />
      <path d="M1050 400L1063 660L1074 880L1084 1080L1088 1120" strokeWidth="2.2" />
      <path d={`M${curve(filletA)}`} />
      <path d={`M${curve(filletB)}`} />
      <path d={`M${curve(backR)}`} strokeWidth="1.8" />
      <path d={`M${curve(shift(backR, -4))}`} />
      <path d="M1101 1204L1153 1168Q1158 1165 1163 1168L1179 1173" strokeWidth="1.4" />
      <path d="M994 703Q1012 713 1030 727M999 801Q1016 810 1035 825M1056 692L1073 703M1061 787L1079 798" strokeWidth="1.3" />
      <path d="M1097 1166L1101 1225" strokeWidth="2.5" />
      <path d="M1053 272L1055 335" strokeWidth="2.2" />
    </g>
    <Fixture x={1022} y={273} />
    <Fixture x={1068} y={1164} />

    {/* force glyph */}
    <g transform="translate(950 640) scale(.3333)">
      <path d="M245 340L322 289Q332 284 335 297V310L245 362Z" fill="#a8a400" />
      <path d="M246 342L322 292L328 298L246 350Z" fill="#ccc810" />
      <path d="M148 375L180 358Q200 355 204 372L200 388L165 408Z" fill="#b8b400" />
      <path d="M148 377L180 360L196 366L160 392Z" fill="#d8d610" />
      <path d="M50 457L120 367Q128 360 137 369L150 376Q168 398 170 430Q168 444 150 442Z" fill="url(#cone)" />
      <path d="M50 457L168 420L170 434L150 442Z" fill="#989400" />
    </g>

    <g fill="#ff2012">
      <polygon points={arrowPoints(484, 294, 449, 242)} />
      <polygon points={arrowPoints(846, 310, 978, 292)} />
      <polygon points={arrowPoints(764, 649, 908, 726)} />
      <polygon points={arrowPoints(920, 1186, 1056, 1187)} />
    </g>

    {/* view axes */}
    <path d="M361 1286L367 1293Q367 1297 361 1298Q355 1297 356 1293Z" fill="#000090" />
    <path d="M374 1296H384V1299H374Z" fill="#009000" />
    <g fontFamily="Liberation Serif, serif" fontSize="12">
      <text x="357" y="1286" fill="#3c3cf0">Z</text>
      <text x="385" y="1298" fill="#30e040">Y</text>
    </g>
  </Scene>
);

const BigB = ({ icon, text, w }: { icon: React.ReactNode; text: string; w?: number }) => (
  <BigButton $w={w}>{icon}<span>{text}</span></BigButton>
);
const Small = ({ icon, text, off }: { icon: React.ReactNode; text: string; off?: boolean }) => (
  <SmallButton $off={off} disabled={off}>{icon}{text}</SmallButton>
);
const tabs = ["三维模型", "草图", "检验", "工具", "管理", "视图", "环境", "BIM", "快速入门", "Vault", "Autodesk A360"];

export default function App() {
  return (
    <App_>
      <Global />
      <Defs />
      <TabBar>
        <Tab $kind="file">文件</Tab>
        {tabs.map((t) => <Tab key={t}>{t}</Tab>)}
        <Tab $kind="active">分析</Tab>
        <Collapse aria-label="最小化功能区">
          <svg width="26" height="10" viewBox="0 0 26 10"><rect x="1" y="1" width="13" height="8" rx="2" fill="#eee" /><path d="M4 6.500H11L7.500 3Z" fill="#333" /><path d="M19 4H25L22 7.500Z" fill="#ddd" /></svg>
        </Collapse>
      </TabBar>
      <Ribbon>
        <Panel $w={95}>
          <PanelBody><BigB icon={I.create} text={"创建\n方案"} /><BigB icon={I.table} text="参数化表" w={54} /></PanelBody>
          <PanelTitle>管理</PanelTitle>
        </Panel>
        <Panel $w={43}><PanelBody $center><BigB icon={I.atom} text="指定" /></PanelBody><PanelTitle>材料</PanelTitle></Panel>
        <Panel $w={122}>
          <PanelBody $pad={2}><BigB icon={I.fix} text="固定" /><Column $gap={5}><Small icon={I.pin} text="孔销连接" /><Small icon={I.slide} text="无摩擦" /></Column></PanelBody>
          <PanelTitle>约束</PanelTitle>
        </Panel>
        <Panel $w={136}>
          <PanelBody $pad={1}><BigB icon={I.force} text="力" /><BigB icon={I.press} text="压力" /><Column $gap={6}><Small icon={I.bearing} text="轴承" /><Small icon={I.moment} text="力矩" /><Small icon={I.apple} text="重力" /></Column></PanelBody>
          <PanelTitle>载荷<Down /></PanelTitle>
        </Panel>
        <Panel $w={60}>
          <PanelBody $pad={7}><Column><Small icon={I.auto} text="自动" off /><Small icon={I.manual} text="手动" /></Column></PanelBody>
          <PanelTitle>接触</PanelTitle>
        </Panel>
        <Panel $w={126}>
          <PanelBody $pad={4}><BigB icon={I.thin} text={"查找薄\n实体"} /><Column $gap={7}><Small icon={I.mid} text="中间曲面" /><Small icon={I.offset} text="偏移" /></Column></PanelBody>
          <PanelTitle>准备</PanelTitle>
        </Panel>
        <Panel $w={84}>
          <PanelBody $pad={2}><BigB icon={I.mesh} text="查看网格" w={54} />
            <Column $gap={1}><IconButton aria-label="网格设置">{I.meshCalc}</IconButton><IconButton aria-label="局部网格控制">{I.meshNew}</IconButton><IconButton aria-label="收敛设置">{I.converge}</IconButton></Column>
          </PanelBody>
          <PanelTitle>网格</PanelTitle>
        </Panel>
        <Panel $w={43}><PanelBody $center><BigB icon={I.solve} text="分析" /></PanelBody><PanelTitle>求解</PanelTitle></Panel>
        <Panel $w={84}>
          <PanelBody $pad={7}><Column><Small icon={I.camera} text="动画制作" /><Small icon={I.probe} text="检查" /><Small icon={I.curve} text="收敛" /></Column></PanelBody>
          <PanelTitle>结果</PanelTitle>
        </Panel>
        <Panel $w={229}>
          <PanelBody $pad={7}>
            <Column><Small icon={I.same} text="相同比例" off /><Small icon={I.bar} text="颜色栏" /><Small icon={I.label} text="检查标签" /></Column>
            <Column $gap={6}><IconButton aria-label="最大值">{I.max}</IconButton><IconButton aria-label="最小值">{I.min}</IconButton><IconButton $on aria-label="边界条件">{I.load}</IconButton></Column>
            <Column $gap={3}>
              <SmallButton>{I.smooth}<span>平滑着色</span><Down w={6} /></SmallButton>
              <SelectWrap>{I.adjust}<SelectBox><Select aria-label="调整位移显示"><option>调整后 x 1</option></Select><Down /></SelectBox></SelectWrap>
            </Column>
          </PanelBody>
          <PanelTitle>显示</PanelTitle>
        </Panel>
        <Panel $w={43}><PanelBody $center><BigB icon={I.report} text="报告" /></PanelBody><PanelTitle>报告</PanelTitle></Panel>
        <Panel $w={43}><PanelBody $center><BigB icon={I.wizard} text="向导" /></PanelBody><PanelTitle>向导</PanelTitle></Panel>
        <Panel $w={83}><PanelBody $center><BigB icon={I.settings} text="应力分析设置" w={78} /></PanelBody><PanelTitle>设置</PanelTitle></Panel>
        <Panel $w={43}><PanelBody $center><BigB icon={I.finish} text={"完成\n分析"} /></PanelBody><PanelTitle $exit>退出</PanelTitle></Panel>
      </Ribbon>
      <Main>
        <Browser>
          <BrowserHead>
            <HeadRow>
              <span />
              <PlainButton aria-label="关闭"><svg width="10" height="10" viewBox="0 0 10 10"><path d="M1 1L9 9M9 1L1 9" stroke="#000" strokeWidth="1.600" /></svg></PlainButton>
            </HeadRow>
            <HeadRow>
              <PlainButton>方案 <Down /></PlainButton>
              <PlainButton aria-label="帮助"><svg width="14" height="14" viewBox="0 0 14 14" fill="none" stroke="#999"><circle cx="7" cy="7" r="6.400" /><path d="M5 5.500C5 3 9 3 9 5.400C9 7 7 6.800 7 8.700M7 10V11.200" strokeWidth="1.300" /></svg></PlainButton>
            </HeadRow>
          </BrowserHead>
          <ul>
            {nodes.map((n, i) => (
              <Row key={i} $level={n.level} $root={i === 0}>
                {n.open === undefined ? <Spacer $w={n.check ? 10 : 12} /> : (
                  <Twist aria-label={n.open ? "折叠" : "展开"}>
                    {n.open
                      ? <svg width="7" height="7" viewBox="1 0 7 7"><path d="M6.500 .5V6.500H.5Z" fill="#333" /></svg>
                      : <svg width="7" height="9" viewBox="2 0 7 9" overflow="visible"><path d="M1.500 1L5 4.500L1.500 8Z" fill="#fff" stroke="#444" /></svg>}
                  </Twist>
                )}
                {n.check && <Check type="checkbox" id="show-result" defaultChecked />}
                {T[n.icon]}
                <Label as={n.check ? "label" : "span"} htmlFor={n.check ? "show-result" : undefined} $boxed={n.check}><Mixed text={n.text} /></Label>
              </Row>
            ))}
          </ul>
          <BrowserArrow width="124" height="30" viewBox="131 381 124 30"><polygon points={arrowPoints(253, 395, 132, 393)} fill="#ff2012" /></BrowserArrow>
        </Browser>
        <Viewer>
          <Model />
          <Info><Mixed text={"类型: 位移"} /><br /><Mixed text={"单位: mm"} /></Info>
          <Info><Mixed text="2021/12/9, 18:29:38" /></Info>
          <Legend>
            <Scale><i /><i /><i /><i /><i /></Scale>
            <Ticks>
              {["0.09113 最大值", "0.0729", "0.05468", "0.03645", "0.01823", "0 最小值"].map((t) => <span key={t}><Mixed text={t} /></span>)}
            </Ticks>
          </Legend>
          <Note $x={368} $y={184}>固定</Note>
          <Note $x={346} $y={497}>500kg</Note>
          <Note $x={508} $y={1070}>固定</Note>
        </Viewer>
      </Main>
    </App_>
  );
}
